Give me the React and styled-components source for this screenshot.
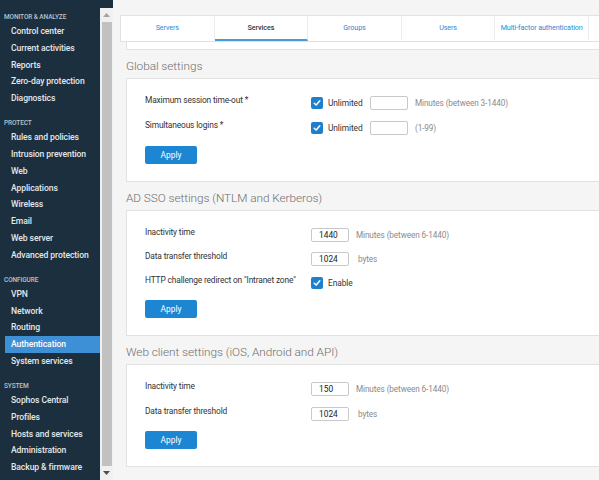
import React from "react";
import styled, { createGlobalStyle } from "styled-components";

const Global = createGlobalStyle`
  html, body { margin: 0; padding: 0; overflow: hidden; background: #f5f5f5; }
  body { font-family: Roboto, "Liberation Sans", sans-serif; }
  * { box-sizing: border-box; }
`;

const Page = styled.div`
  display: flex;
  width: 599px;
  height: 480px;
  overflow: hidden;
`;

const Sidebar = styled.aside`
  flex: 0 0 113px;
  display: flex;
  background: #1c2f3e;
  height: 480px;
`;

const Nav = styled.nav`
  flex: 0 0 100px;
  padding-top: 11px;
  overflow: hidden;
`;

const Section = styled.div`
  & + & { margin-top: 10.5px; }
`;

const SectionTitle = styled.div`
  height: 12px;
  line-height: 12px;
  padding-left: 4px;
  font-size: 6.5px;
  font-weight: 500;
  letter-spacing: -0.1px;
  color: #b9c3cb;
  text-transform: uppercase;
`;

const NavItem = styled.div`
  height: 16.75px;
  line-height: 16.75px;
  margin-left: 5px;
  padding-left: 6px;
  font-size: 8.6px;
  font-weight: 500;
  letter-spacing: -0.1px;
  white-space: nowrap;
  color: ${(p) => (p.$active ? "#ffffff" : "#e2e8ec")};
  background: ${(p) => (p.$active ? "#3d8fd6" : "transparent")};
`;

const ScrollTrack = styled.div`
  flex: 0 0 13px;
  margin-top: 8px;
  background: #f0f0f0;
  display: flex;
  flex-direction: column;
  align-items: center;
`;

const Arrow = styled.div`
  flex: 0 0 14px;
  display: flex;
  align-items: center;
  justify-content: center;
`;

const Thumb = styled.div`
  flex: 1;
  width: 10px;
  background: #c1c1c1;
`;

const Main = styled.main`
  flex: 1;
  min-width: 0;
  overflow: hidden;
  padding-top: 15px;
`;

const TabBar = styled.div`
  margin-left: 7px;
  width: 600px;
  height: 27px;
  display: flex;
  background: #fff;
  border: 1px solid #e2e2e2;
`;

const Tab = styled.div`
  flex: 0 0 93.6px;
  display: flex;
  align-items: center;
  justify-content: center;
  font-size: 7.2px;
  letter-spacing: -0.1px;
  white-space: nowrap;
  color: ${(p) => (p.$active ? "#333" : "#2b8ad3")};
  font-weight: ${(p) => (p.$active ? 500 : 400)};
  border-right: 1px solid #ececec;
  border-bottom: 2px solid ${(p) => (p.$active ? "#4a9ad8" : "transparent")};
`;

const Content = styled.div`
  margin-left: 13px;
  width: 560px;
`;

const Strip = styled.div`
  height: 8px;
  background: #fff;
  border: 1px solid #e2e2e2;
  border-top: none;
`;

const Heading = styled.h2`
  margin: 0;
  height: 28px;
  padding-top: 8px;
  font-size: 11.8px;
  line-height: 16px;
  font-weight: 300;
  color: #6e6e6e;
  letter-spacing: -0.05px;
`;

const Card = styled.section`
  background: #fff;
  border: 1px solid #e2e2e2;
  padding: 17px 18px 17px 18px;
  display: flex;
  flex-direction: column;
  gap: ${(p) => p.$gap || 11}px;
`;

const Row = styled.div`
  display: flex;
  align-items: flex-start;
  height: 14px;
`;

const Label = styled.div`
  flex: 0 0 166px;
  font-size: 8.4px;
  line-height: 9px;
  color: #333;
  letter-spacing: -0.15px;
  white-space: nowrap;
`;

const Controls = styled.div`
  display: flex;
  align-items: center;
  height: 14px;
`;

const Box = styled.span`
  width: 12px;
  height: 12px;
  border-radius: 2px;
  background: #1f7fcf;
  display: inline-flex;
  align-items: center;
  justify-content: center;
  margin-right: 5px;
`;

const CheckText = styled.span`
  font-size: 8.4px;
  color: #333;
  letter-spacing: -0.1px;
  width: ${(p) => (p.$w ? p.$w + "px" : "auto")};
`;

const Input = styled.div`
  width: 38px;
  height: 14px;
  border: 1px solid #c9c9c9;
  border-radius: 2px;
  background: #fff;
  font-size: 8.4px;
  line-height: 12px;
  padding-left: 7px;
  color: #222;
`;

const Hint = styled.span`
  margin-left: ${(p) => p.$ml || 7}px;
  font-size: 8.2px;
  color: #8a8a8a;
  letter-spacing: -0.1px;
`;

const Button = styled.button`
  width: 52px;
  height: 18px;
  border: none;
  border-radius: 2px;
  background: #1c86d3;
  color: #fff;
  font-family: inherit;
  font-size: 8.4px;
  padding: 0;
`;

const Check = () => (
  <Box>
    <svg width="8" height="8" viewBox="0 0 8 8">
      <path d="M1.2 4.2 L3.2 6 L6.8 1.8" fill="none" stroke="#fff" strokeWidth="1.5" strokeLinecap="round" strokeLinejoin="round" />
    </svg>
  </Box>
);

const nav = [
  ["Monitor & analyze", ["Control center", "Current activities", "Reports", "Zero-day protection", "Diagnostics"]],
  ["Protect", ["Rules and policies", "Intrusion prevention", "Web", "Applications", "Wireless", "Email", "Web server", "Advanced protection"]],
  ["Configure", ["VPN", "Network", "Routing", "Authentication", "System services"]],
  ["System", ["Sophos Central", "Profiles", "Hosts and services", "Administration", "Backup & firmware"]],
];

const tabs = ["Servers", "Services", "Groups", "Users", "Multi-factor authentication", ""];

export default function App() {
  return (
    <Page>
      <Global />
      <Sidebar>
        <Nav>
          {nav.map(([title, items]) => (
            <Section key={title}>
              <SectionTitle>{title}</SectionTitle>
              {items.map((i) => (
                <NavItem key={i} $active={i === "Authentication"}>{i}</NavItem>
              ))}
            </Section>
          ))}
        </Nav>
        <ScrollTrack>
          <Arrow>
            <svg width="7" height="4" viewBox="0 0 7 4"><path d="M0 4 L3.5 0 L7 4Z" fill="#a3a3a3" /></svg>
          </Arrow>
          <Thumb />
          <Arrow>
            <svg width="7" height="4" viewBox="0 0 7 4"><path d="M0 0 L3.5 4 L7 0Z" fill="#505050" /></svg>
          </Arrow>
        </ScrollTrack>
      </Sidebar>
      <Main>
        <TabBar>
          {tabs.map((t, i) => (
            <Tab key={i} $active={t === "Services"}>{t}</Tab>
          ))}
        </TabBar>
        <Content>
          <Strip />
          <Heading>Global settings</Heading>
          <Card>
            <Row>
              <Label>Maximum session time-out *</Label>
              <Controls>
                <Check />
                <CheckText $w={42}>Unlimited</CheckText>
                <Input />
                <Hint>Minutes (between 3-1440)</Hint>
              </Controls>
            </Row>
            <Row>
              <Label>Simultaneous logins *</Label>
              <Controls>
                <Check />
                <CheckText $w={42}>Unlimited</CheckText>
                <Input />
                <Hint>(1-99)</Hint>
              </Controls>
            </Row>
            <Button>Apply</Button>
          </Card>
          <Heading>AD SSO settings (NTLM and Kerberos)</Heading>
          <Card $gap={10}>
            <Row>
              <Label>Inactivity time</Label>
              <Controls>
                <Input>1440</Input>
                <Hint>Minutes (between 6-1440)</Hint>
              </Controls>
            </Row>
            <Row>
              <Label>Data transfer threshold</Label>
              <Controls>
                <Input>1024</Input>
                <Hint $ml={9}>bytes</Hint>
              </Controls>
            </Row>
            <Row>
              <Label>HTTP challenge redirect on "Intranet zone"</Label>
              <Controls>
                <Check />
                <CheckText>Enable</CheckText>
              </Controls>
            </Row>
            <Button>Apply</Button>
          </Card>
          <Heading>Web client settings (iOS, Android and API)</Heading>
          <Card $gap={10.5}>
            <Row>
              <Label>Inactivity time</Label>
              <Controls>
                <Input>150</Input>
                <Hint>Minutes (between 6-1440)</Hint>
              </Controls>
            </Row>
            <Row>
              <Label>Data transfer threshold</Label>
              <Controls>
                <Input>1024</Input>
                <Hint $ml={9}>bytes</Hint>
              </Controls>
            </Row>
            <Button>Apply</Button>
          </Card>
        </Content>
      </Main>
    </Page>
  );
}
